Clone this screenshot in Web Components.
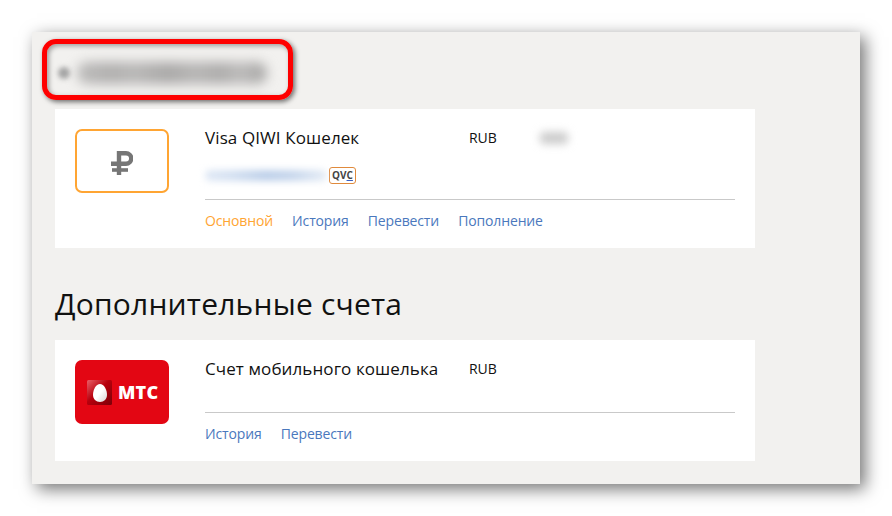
<!DOCTYPE html>
<html>
<head>
<meta charset="utf-8">
<title>Счета</title>
<style>
  html, body { margin: 0; background: #fff; }
  body { font-family: "Open Sans", "Noto Sans", sans-serif; color: #111; }
</style>
</head>
<body>

<accounts-page>
  <blur-header slot="top"></blur-header>

  <account-card title="Visa QIWI Кошелек" currency="RUB" amount>
    <ruble-logo slot="logo"></ruble-logo>
    <card-number slot="sub"></card-number>
    <account-link active>Основной</account-link>
    <account-link>История</account-link>
    <account-link>Перевести</account-link>
    <account-link>Пополнение</account-link>
  </account-card>

  <section-title>Дополнительные счета</section-title>

  <account-card title="Счет мобильного кошелька" currency="RUB">
    <mts-logo slot="logo"></mts-logo>
    <account-link>История</account-link>
    <account-link>Перевести</account-link>
  </account-card>
</accounts-page>

<script>
class AccountsPage extends HTMLElement {
  connectedCallback() {
    this.attachShadow({ mode: "open" });
    this.shadowRoot.innerHTML = `
      <style>
        :host { display: block; padding: 32px; width: 828px; height: 452px; }
        .panel {
          box-sizing: border-box;
          height: 452px;
          padding: 0 105px 0 23px;
          background: #f2f1ef;
          box-shadow: 5px 5px 16px rgba(0, 0, 0, 0.55);
        }
      </style>
      <div class="panel">
        <slot name="top"></slot>
        <slot></slot>
      </div>
    `;
  }
}

class BlurHeader extends HTMLElement {
  connectedCallback() {
    this.attachShadow({ mode: "open" });
    this.shadowRoot.innerHTML = `
      <style>
        :host { display: block; position: relative; height: 77px; }
        .row { display: flex; align-items: center; gap: 7px; height: 77px; padding-left: 3px; box-sizing: border-box; transform: translateY(2px); }
        .dot { width: 12px; height: 12px; border-radius: 50%; background: #a4a4a4; filter: blur(2.5px); }
        .bar {
          width: 190px; height: 22px; border-radius: 10px; filter: blur(6px);
          background: linear-gradient(90deg, #bdbcbb, #b0afae 18%, #b8b7b6 30%, #a9a8a7 48%, #b6b5b4 62%, #adacab 76%, #bcbbba 86%, #a6a5a4 100%);
        }
        /* red marker drawn on top of the screenshot */
        .marker {
          position: absolute;
          left: -13px;
          top: 7px;
          width: 241px;
          height: 51px;
          border: 5px solid #fe0000;
          border-radius: 14px;
          box-shadow: 2px 2px 5px rgba(0, 0, 0, 0.55), inset 2px 2px 5px rgba(0, 0, 0, 0.35);
        }
      </style>
      <div class="row"><span class="dot"></span><span class="bar"></span></div>
      <div class="marker"></div>
    `;
  }
}

class AccountCard extends HTMLElement {
  connectedCallback() {
    this.attachShadow({ mode: "open" });
    const amount = this.hasAttribute("amount") ? `<span class="amount"></span>` : "";
    this.shadowRoot.innerHTML = `
      <style>
        :host { display: block; background: #fff; padding: 20px 20px 17px; }
        .card { display: grid; grid-template-columns: 94px 1fr; column-gap: 36px; }
        .head { min-height: 38px; }
        .line { display: flex; align-items: center; height: 18px; }
        .title { width: 264px; font-size: 17px; line-height: 18px; letter-spacing: 0.1px; white-space: nowrap; }
        .cur { width: 69px; font-size: 14px; line-height: 18px; letter-spacing: -0.1px; }
        .amount { width: 28px; height: 12px; border-radius: 4px; background: #cbcbcb; filter: blur(4px); margin-left: 2px; }
        ::slotted([slot="sub"]) { margin-top: 18px; }
        .rule { height: 1px; background: #c9c9c9; margin-top: 14px; }
        .links { display: flex; gap: 19.2px; margin-top: 11px; }
      </style>
      <div class="card">
        <slot name="logo"></slot>
        <div>
          <div class="head">
            <div class="line">
              <span class="title">${this.getAttribute("title")}</span>
              <span class="cur">${this.getAttribute("currency")}</span>
              ${amount}
            </div>
            <slot name="sub"></slot>
          </div>
          <div class="rule"></div>
          <div class="links"><slot></slot></div>
        </div>
      </div>
    `;
  }
}

class AccountLink extends HTMLElement {
  connectedCallback() {
    this.attachShadow({ mode: "open" });
    const color = this.hasAttribute("active") ? "#ffa533" : "#4a78bd";
    this.shadowRoot.innerHTML = `
      <style>
        :host { display: block; font-size: 14px; line-height: 20px; color: ${color}; letter-spacing: -0.15px; white-space: nowrap; }
      </style>
      <slot></slot>
    `;
  }
}

class RubleLogo extends HTMLElement {
  connectedCallback() {
    this.attachShadow({ mode: "open" });
    this.shadowRoot.innerHTML = `
      <style>
        :host {
          display: flex; align-items: center; justify-content: center;
          box-sizing: border-box; width: 94px; height: 64px;
          border: 2px solid #ffa533; border-radius: 7px; background: #fff;
        }
        svg { margin-top: 4px; }
      </style>
      <svg width="22" height="24" viewBox="0 0 22 24">
        <path d="M8 24V2.200h7a5.250 5.250 0 0 1 0 10.500H0" fill="none" stroke="#767676" stroke-width="4.400"/>
        <path d="M1 19H17" fill="none" stroke="#767676" stroke-width="3.600"/>
      </svg>
    `;
  }
}

class CardNumber extends HTMLElement {
  connectedCallback() {
    this.attachShadow({ mode: "open" });
    this.shadowRoot.innerHTML = `
      <style>
        :host { display: flex; align-items: center; gap: 2px; height: 20px; }
        .num {
          width: 122px; height: 11px; border-radius: 5px; filter: blur(3.5px);
          background: linear-gradient(90deg, #dfe8f5, #d5e1f2 20%, #bccfe9 50%, #c6d6ec 72%, #e6edf6);
        }
        .badge {
          box-sizing: border-box; width: 27px; height: 17px;
          border: 1px solid #e08a3c; border-radius: 3px;
          font: 700 10px/15px "Open Sans", sans-serif; text-align: center; color: #444;
        }
        .badge u { text-decoration-color: #3a5fc0; }
      </style>
      <span class="num"></span>
      <span class="badge">QV<u>C</u></span>
    `;
  }
}

class MtsLogo extends HTMLElement {
  connectedCallback() {
    this.attachShadow({ mode: "open" });
    this.shadowRoot.innerHTML = `
      <style>
        :host {
          display: flex; align-items: center; gap: 6px;
          box-sizing: border-box; width: 94px; height: 64px; padding: 0 0 0 12px;
          background: #e30613; border-radius: 7px;
        }
        .text { font: 800 18px/1 "Open Sans", sans-serif; color: #fff; letter-spacing: 0.2px; }
        svg { display: block; }
      </style>
      <svg width="25" height="25" viewBox="0 0 25 25">
        <defs>
          <linearGradient id="sq" x1="0" y1="0" x2="1" y2="1">
            <stop offset="0" stop-color="#ea6068"/>
            <stop offset="0.45" stop-color="#b8000d"/>
            <stop offset="1" stop-color="#7c0008"/>
          </linearGradient>
          <linearGradient id="egg" x1="0" y1="0" x2="1" y2="1">
            <stop offset="0.5" stop-color="#ffffff"/>
            <stop offset="1" stop-color="#d9d2d2"/>
          </linearGradient>
        </defs>
        <rect width="25" height="25" rx="1.5" fill="url(#sq)"/>
        <path d="M13 4C9 4 6 9.800 6 14.800 6 19.200 9 22 13 22s7-2.800 7-7.200C20 9.800 17 4 13 4z" fill="url(#egg)"/>
      </svg>
      <span class="text">МТС</span>
    `;
  }
}

class SectionTitle extends HTMLElement {
  connectedCallback() {
    this.attachShadow({ mode: "open" });
    this.shadowRoot.innerHTML = `
      <style>
        :host { display: block; height: 92px; font-size: 30px; line-height: 40px; letter-spacing: 0.2px; box-sizing: border-box; padding-top: 36px; color: #111; white-space: nowrap; }
      </style>
      <slot></slot>
    `;
  }
}

customElements.define("accounts-page", AccountsPage);
customElements.define("blur-header", BlurHeader);
customElements.define("account-card", AccountCard);
customElements.define("account-link", AccountLink);
customElements.define("ruble-logo", RubleLogo);
customElements.define("card-number", CardNumber);
customElements.define("mts-logo", MtsLogo);
customElements.define("section-title", SectionTitle);
</script>
</body>
</html>
